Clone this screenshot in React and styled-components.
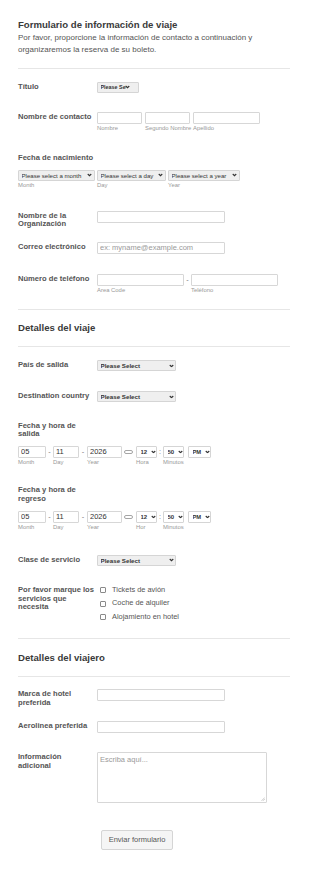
import React from "react";
import styled, { createGlobalStyle } from "styled-components";

const GlobalStyle = createGlobalStyle`
  html, body {
    margin: 0;
    padding: 0;
    background: #fff;
  }
  body {
    font-family: "Liberation Sans", Arial, sans-serif;
    color: #555;
  }
  * {
    box-sizing: border-box;
  }
`;

const Page = styled.form`
  width: 310px;
  padding: 19px 20px 19px 18px;
`;

const Title = styled.h1`
  margin: 0;
  font-size: 9.6px;
  line-height: 12px;
  font-weight: 700;
  color: #3a3a3a;
`;

const Intro = styled.p`
  margin: 1.3px 0 0;
  font-size: 8px;
  line-height: 11.7px;
  color: #555;
`;

const Divider = styled.div`
  height: 1px;
  background: #e6e6e6;
  margin-top: ${({ $mt }) => $mt}px;
`;

const SectionTitle = styled.h2`
  margin: ${({ $mt }) => $mt}px 0 0;
  font-size: 9.6px;
  line-height: 12px;
  font-weight: 700;
  color: #3a3a3a;
`;

const Row = styled.div`
  display: flex;
  align-items: flex-start;
  margin-top: ${({ $mt }) => $mt}px;
`;

const Label = styled.label`
  flex: 0 0 76.5px;
  margin-right: 2.5px;
  padding-top: 1px;
  font-size: 7.6px;
  line-height: 8.7px;
  font-weight: 700;
  color: #555;
`;

const TopRow = styled.div`
  margin-top: ${({ $mt }) => $mt}px;
`;

const TopLabel = styled.label`
  display: block;
  width: 76.5px;
  font-size: 7.6px;
  line-height: 8.7px;
  font-weight: 700;
  color: #555;
`;

const Group = styled.div`
  display: flex;
  align-items: flex-start;
  gap: ${({ $gap }) => $gap || 0}px;
  margin-top: ${({ $mt }) => $mt || 0}px;
`;

const FieldCol = styled.div`
  display: flex;
  flex-direction: column;
  width: ${({ $w }) => $w}px;
  flex: 0 0 auto;
`;

const Sub = styled.span`
  margin-top: 1.5px;
  font-size: 5.9px;
  line-height: 7px;
  color: #999;
  white-space: nowrap;
`;

const Input = styled.input`
  width: ${({ $w }) => ($w ? `${$w}px` : "100%")};
  height: 12px;
  margin: 0;
  padding: 0 2px;
  border: 1px solid #d7d7d7;
  border-radius: 1px;
  background: #fff;
  font-family: inherit;
  font-size: 7.5px;
  color: #333;
  outline: none;
  &::placeholder {
    color: #9a9a9a;
  }
`;

const Sep = styled.span`
  flex: 0 0 ${({ $w }) => $w}px;
  height: 12px;
  display: flex;
  align-items: center;
  justify-content: center;
  font-size: 7.3px;
  color: #777;
`;

const CalIcon = styled.span`
  flex: 0 0 9px;
  height: 4.5px;
  margin: 4px 3px 0 2px;
  border: 1px solid #a5a5a5;
  border-radius: 3px;
`;

const SelectWrap = styled.span`
  position: relative;
  display: inline-flex;
  flex: 0 0 auto;
  width: ${({ $w }) => $w}px;
`;

const Select = styled.select`
  appearance: none;
  -webkit-appearance: none;
  width: 100%;
  height: ${({ $h }) => $h || 11}px;
  margin: 0;
  padding: 0 ${({ $pr }) => $pr || 8}px 0 ${({ $pl }) => $pl || 2.5}px;
  border: 1px solid #d5d5d5;
  border-radius: 1px;
  background: ${({ $light }) => ($light ? "#fff" : "#efefef")};
  font-family: inherit;
  font-size: ${({ $fs }) => $fs || 6.2}px;
  font-weight: ${({ $bold }) => ($bold ? 700 : 400)};
  color: #333;
  outline: none;
`;

const Chevron = styled.svg`
  position: absolute;
  right: ${({ $r }) => $r}px;
  top: 50%;
  width: 5px;
  height: 3.5px;
  transform: translateY(-50%);
  pointer-events: none;
`;

const Arrow = ({ r = 2.5 }) => (
  <Chevron $r={r} viewBox="0 0 10 7">
    <path d="M1.5 1.5 L5 5 L8.5 1.5" fill="none" stroke="#333" strokeWidth="2.2" />
  </Chevron>
);

const Dropdown = ({ w, r, options, ...rest }) => (
  <SelectWrap $w={w}>
    <Select {...rest}>
      {options.map((o) => (
        <option key={o}>{o}</option>
      ))}
    </Select>
    <Arrow r={r} />
  </SelectWrap>
);

const CheckList = styled.div`
  display: flex;
  flex-direction: column;
  gap: 3.5px;
`;

const CheckItem = styled.label`
  display: flex;
  align-items: center;
  font-size: 7.4px;
  line-height: 10px;
  color: #555;
`;

const Box = styled.input`
  appearance: none;
  -webkit-appearance: none;
  width: 6px;
  height: 6px;
  margin: 1px 6px 0 3px;
  border: 1px solid #8a8a8a;
  border-radius: 1px;
  background: #fff;
`;

const TextWrap = styled.div`
  position: relative;
  width: 170px;
  height: 51px;
`;

const TextArea = styled.textarea`
  width: 100%;
  height: 100%;
  margin: 0;
  padding: 2px;
  border: 1px solid #d7d7d7;
  border-radius: 1px;
  resize: none;
  font-family: inherit;
  font-size: 7.5px;
  line-height: 9px;
  color: #333;
  outline: none;
  &::placeholder {
    color: #9a9a9a;
  }
`;

const Grip = styled.svg`
  position: absolute;
  right: 2px;
  bottom: 2px;
  width: 4px;
  height: 4px;
`;

const SubmitButton = styled.button`
  display: block;
  margin: 27px 0 0 83px;
  width: 72px;
  height: 20px;
  padding: 0;
  border: 1px solid #d5d5d5;
  border-radius: 2px;
  background: #f5f5f5;
  font-family: inherit;
  font-size: 7.5px;
  color: #555;
`;

const PLEASE = ["Please Select"];

const DateTime = ({ hourLabel }) => (
  <Group $mt={7}>
    <FieldCol $w={28}>
      <Input defaultValue="05" />
      <Sub>Month</Sub>
    </FieldCol>
    <Sep $w={7}>-</Sep>
    <FieldCol $w={26}>
      <Input defaultValue="11" />
      <Sub>Day</Sub>
    </FieldCol>
    <Sep $w={8}>-</Sep>
    <FieldCol $w={35}>
      <Input defaultValue="2026" />
      <Sub>Year</Sub>
    </FieldCol>
    <CalIcon />
    <FieldCol $w={21}>
      <Dropdown w={21} r={1.5} $h={12} $light $bold $fs={6} $pl={3.5} options={["12"]} />
      <Sub>{hourLabel}</Sub>
    </FieldCol>
    <Sep $w={6}>:</Sep>
    <FieldCol $w={21}>
      <Dropdown w={21} r={1.5} $h={12} $light $bold $fs={6} $pl={3.5} options={["50"]} />
      <Sub>Minutos</Sub>
    </FieldCol>
    <Sep $w={4} />
    <FieldCol $w={23}>
      <Dropdown w={23} r={1.5} $h={12} $light $bold $fs={5.8} $pl={3.5} options={["PM", "AM"]} />
    </FieldCol>
  </Group>
);

export default function App() {
  return (
    <>
      <GlobalStyle />
      <Page onSubmit={(e) => e.preventDefault()}>
        <Title>Formulario de información de viaje</Title>
        <Intro>
          Por favor, proporcione la información de contacto a continuación y
          organizaremos la reserva de su boleto.
        </Intro>
        <Divider $mt={12} />

        <Row $mt={13}>
          <Label>Título</Label>
          <Dropdown w={42} r={9} $bold $fs={5.4} $pr={12} options={["Please Select", "Sr.", "Sra.", "Srta.", "Dr."]} />
        </Row>

        <Row $mt={19}>
          <Label>Nombre de contacto</Label>
          <Group $gap={3}>
            <FieldCol $w={45}>
              <Input />
              <Sub>Nombre</Sub>
            </FieldCol>
            <FieldCol $w={45}>
              <Input />
              <Sub>Segundo Nombre</Sub>
            </FieldCol>
            <FieldCol $w={67}>
              <Input />
              <Sub>Apellido</Sub>
            </FieldCol>
          </Group>
        </Row>

        <TopRow $mt={22}>
          <TopLabel>Fecha de nacimiento</TopLabel>
          <Group $gap={2} $mt={7}>
            <FieldCol $w={77}>
              <Dropdown w={77} r={3} $fs={6.1} $pr={8} options={["Please select a month"]} />
              <Sub>Month</Sub>
            </FieldCol>
            <FieldCol $w={69}>
              <Dropdown w={69} r={3} $fs={6.1} $pr={8} options={["Please select a day"]} />
              <Sub>Day</Sub>
            </FieldCol>
            <FieldCol $w={72}>
              <Dropdown w={72} r={3} $fs={6.1} $pr={8} options={["Please select a year"]} />
              <Sub>Year</Sub>
            </FieldCol>
          </Group>
        </TopRow>

        <Row $mt={21.3}>
          <Label>Nombre de la Organización</Label>
          <Input $w={128} />
        </Row>

        <Row $mt={12.6}>
          <Label>Correo electrónico</Label>
          <Input $w={128} placeholder="ex: myname@example.com" />
        </Row>

        <Row $mt={20}>
          <Label>Número de teléfono</Label>
          <Group>
            <FieldCol $w={87}>
              <Input />
              <Sub>Area Code</Sub>
            </FieldCol>
            <Sep $w={7}>-</Sep>
            <FieldCol $w={87}>
              <Input />
              <Sub>Teléfono</Sub>
            </FieldCol>
          </Group>
        </Row>

        <Divider $mt={14.5} />
        <SectionTitle $mt={12}>Detalles del viaje</SectionTitle>
        <Divider $mt={12.3} />

        <Row $mt={13}>
          <Label>País de salida</Label>
          <Dropdown w={79} r={2.5} $bold $pr={9} options={PLEASE} />
        </Row>

        <Row $mt={20}>
          <Label>Destination country</Label>
          <Dropdown w={79} r={2.5} $bold $pr={9} options={PLEASE} />
        </Row>

        <TopRow $mt={19.5}>
          <TopLabel>Fecha y hora de salida</TopLabel>
          <DateTime hourLabel="Hora" />
        </TopRow>

        <TopRow $mt={20}>
          <TopLabel>Fecha y hora de regreso</TopLabel>
          <DateTime hourLabel="Hor" />
        </TopRow>

        <Row $mt={23.5}>
          <Label>Clase de servicio</Label>
          <Dropdown w={79} r={2.5} $bold $pr={9} options={PLEASE} />
        </Row>

        <Row $mt={19}>
          <Label>Por favor marque los servicios que necesita</Label>
          <CheckList>
            <CheckItem>
              <Box type="checkbox" />
              Tickets de avión
            </CheckItem>
            <CheckItem>
              <Box type="checkbox" />
              Coche de alquiler
            </CheckItem>
            <CheckItem>
              <Box type="checkbox" />
              Alojamiento en hotel
            </CheckItem>
          </CheckList>
        </Row>

        <Divider $mt={16.2} />
        <SectionTitle $mt={12.7}>Detalles del viajero</SectionTitle>
        <Divider $mt={12} />

        <Row $mt={12.3}>
          <Label>Marca de hotel preferida</Label>
          <Input $w={128} />
        </Row>

        <Row $mt={13.6}>
          <Label>Aerolinea preferida</Label>
          <Input $w={128} />
        </Row>

        <Row $mt={19}>
          <Label>Información adicional</Label>
          <TextWrap>
            <TextArea placeholder="Escriba aquí..." />
            <Grip viewBox="0 0 4 4">
              <path d="M0.5 3.8 L3.8 0.5 M2 3.8 L3.8 2" stroke="#aaa" strokeWidth="0.6" />
            </Grip>
          </TextWrap>
        </Row>

        <SubmitButton type="submit">Enviar formulario</SubmitButton>
      </Page>
    </>
  );
}
